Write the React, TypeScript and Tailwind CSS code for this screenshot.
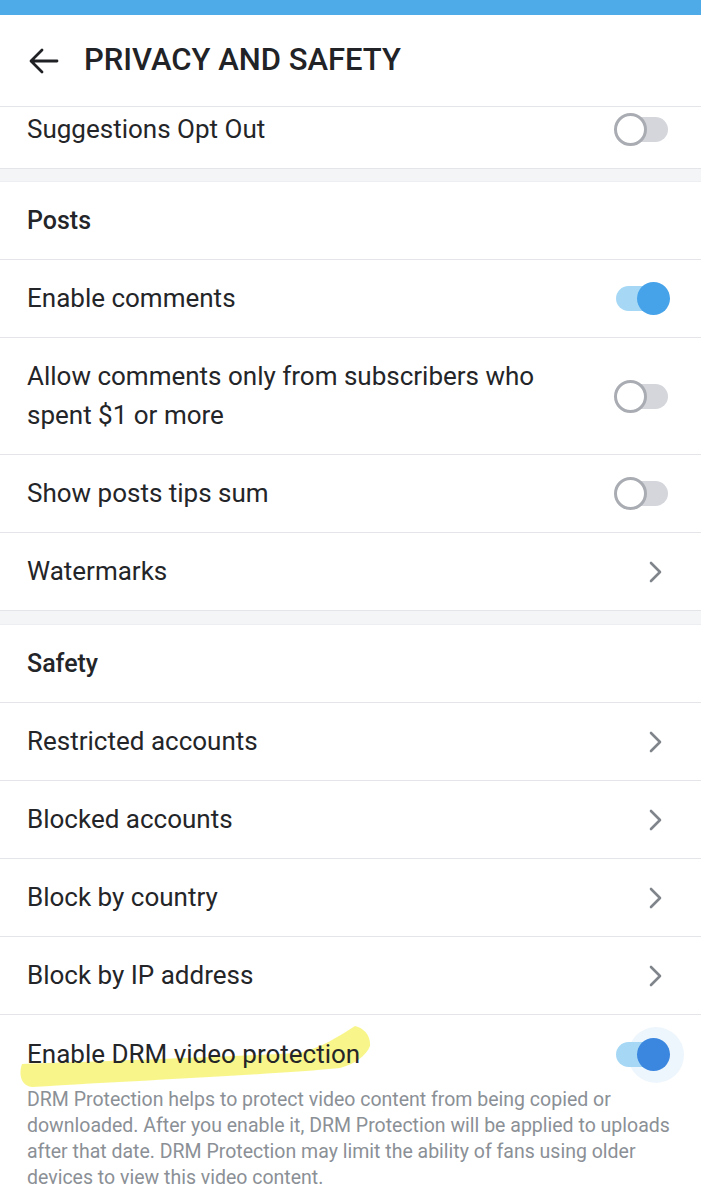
import React from 'react';

type Row =
  | { kind: 'toggle'; label: string; on: boolean }
  | { kind: 'link'; label: string };

const postsRows: Row[] = [
  { kind: 'toggle', label: 'Enable comments', on: true },
  { kind: 'toggle', label: 'Allow comments only from subscribers who spent $1 or more', on: false },
  { kind: 'toggle', label: 'Show posts tips sum', on: false },
  { kind: 'link', label: 'Watermarks' },
];

const safetyRows: Row[] = [
  { kind: 'link', label: 'Restricted accounts' },
  { kind: 'link', label: 'Blocked accounts' },
  { kind: 'link', label: 'Block by country' },
  { kind: 'link', label: 'Block by IP address' },
];

const Toggle = ({ on, dark }: { on: boolean; dark?: boolean }) => {
  if (on) {
    return (
      <div className="relative w-[56px] h-[34px] flex items-center shrink-0">
        {dark && <div className="absolute right-[-14px] top-[-11px] w-[56px] h-[56px] rounded-full bg-[#eef6fd]" />}
        <div className="absolute left-[2px] right-[2px] h-[25px] rounded-full bg-[#a6d8f5]" />
        <div
          className={`absolute right-0 w-[33px] h-[33px] rounded-full ${dark ? 'bg-[#3b86de]' : 'bg-[#46a3ea]'}`}
        />
      </div>
    );
  }
  return (
    <div className="relative w-[56px] h-[34px] flex items-center shrink-0">
      <div className="absolute left-[2px] right-[2px] h-[25px] rounded-full bg-[#d4d6db]" />
      <div className="absolute left-0 w-[33px] h-[33px] rounded-full bg-white border-[3px] border-[#a9acb2]" />
    </div>
  );
};

const Chevron = () => (
  <svg width="22" height="26" viewBox="0 0 22 26" className="shrink-0 mr-[4px]">
    <path d="M7 4 L16 13 L7 22" fill="none" stroke="#80858c" strokeWidth="2.6" strokeLinecap="round" strokeLinejoin="round" />
  </svg>
);

const SettingRow = ({ row }: { row: Row }) => (
  <div className="flex items-center justify-between pl-[27px] pr-[31px] py-[19px] min-h-[78px] border-b border-[#e3e5e9]">
    <span className="text-[26px] leading-[39px] text-[#242528] pr-8">{row.label}</span>
    {row.kind === 'toggle' ? <Toggle on={row.on} /> : <Chevron />}
  </div>
);

const SectionTitle = ({ title }: { title: string }) => (
  <div className="flex items-center h-[78px] pl-[27px] border-b border-[#e3e5e9]">
    <span className="text-[25px] font-medium text-[#242528]">{title}</span>
  </div>
);

const Gap = ({ h }: { h: string }) => <div className={`${h} bg-[#f4f5f7] border-b border-[#eceef1]`} />;

export default function App() {
  return (
    <div className="w-[701px] h-[1200px] overflow-hidden bg-white font-['Roboto',sans-serif]">
      <div className="h-[15px] bg-[#4fabe8]" />
      <div className="flex items-center h-[92px] pl-[28px] border-b border-[#e3e5e9]">
        <svg width="32" height="28" viewBox="0 0 32 28" className="shrink-0">
          <path d="M29 14 H4 M14 3 L3 14 L14 25" fill="none" stroke="#202124" strokeWidth="2.8" strokeLinecap="round" strokeLinejoin="round" />
        </svg>
        <h1 className="ml-[24px] text-[31px] font-medium text-[#222326]">PRIVACY AND SAFETY</h1>
      </div>

      <div className="flex items-center justify-between h-[62px] pl-[27px] pr-[31px] pb-[16px] border-b border-[#e3e5e9]">
        <span className="text-[26px] text-[#242528]">Suggestions Opt Out</span>
        <Toggle on={false} />
      </div>
      <Gap h="h-[13px]" />

      <SectionTitle title="Posts" />
      {postsRows.map((r) => (
        <SettingRow key={r.label} row={r} />
      ))}
      <Gap h="h-[14px]" />

      <SectionTitle title="Safety" />
      {safetyRows.map((r) => (
        <SettingRow key={r.label} row={r} />
      ))}

      <div className="pl-[27px] pr-[31px] pt-[20px]">
        <div className="flex items-center justify-between">
          <div className="relative">
            {/* highlighter stroke */}
            <svg className="absolute left-[-27px] top-[-15px]" width="380" height="75" viewBox="0 0 380 75">
              <path
                d="M22 44 C80 42 200 38 300 33 C320 28 340 16 355 6 C364 8 371 16 370 26 C366 36 355 44 340 48 C280 54 150 60 32 67 C22 66 18 56 22 44 Z"
                fill="#f7f57e"
                opacity="0.9"
              />
            </svg>
            <span className="relative text-[26px] leading-[39px] text-[#242528]">Enable DRM video protection</span>
          </div>
          <Toggle on dark />
        </div>
        <p className="mt-[13px] text-[19.5px] leading-[26px] text-[#8b9096]">
          DRM Protection helps to protect video content from being copied or downloaded. After you enable it, DRM
          Protection will be applied to uploads after that date. DRM Protection may limit the ability of fans using
          older devices to view this video content.
        </p>
      </div>
    </div>
  );
}
